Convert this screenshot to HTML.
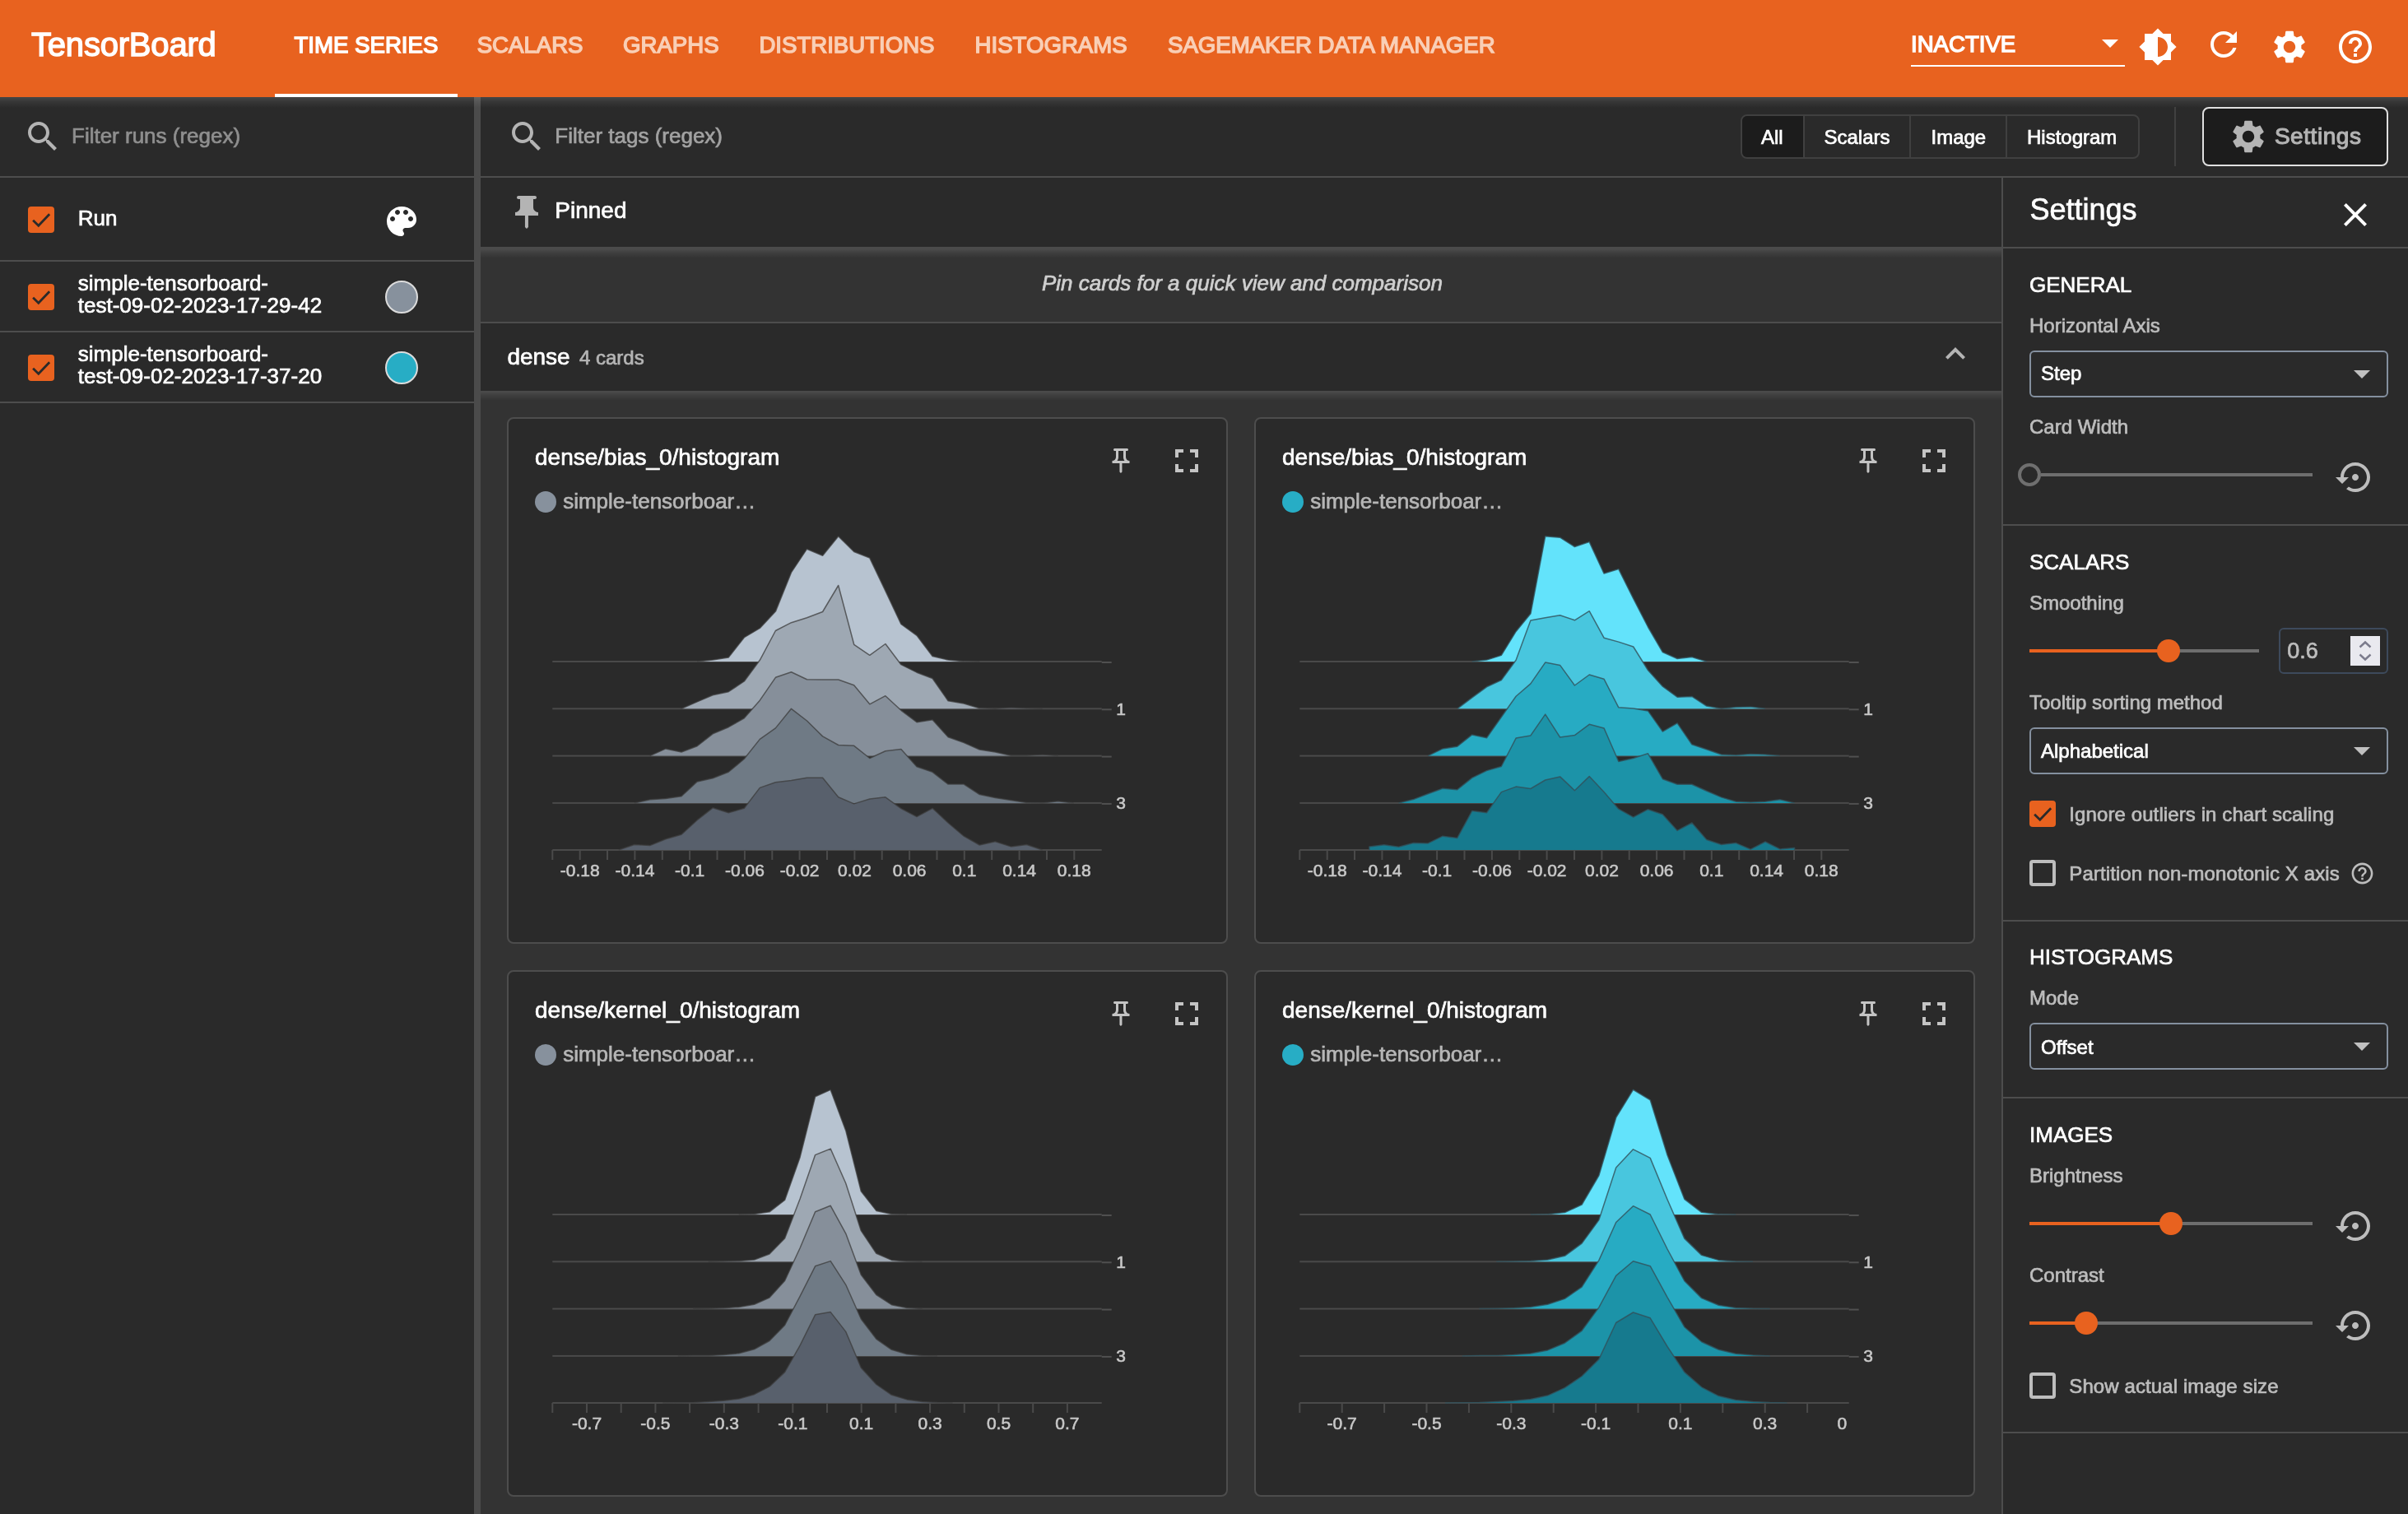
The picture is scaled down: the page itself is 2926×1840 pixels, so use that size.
<!DOCTYPE html>
<html><head><meta charset="utf-8"><title>TensorBoard</title><style>
html,body{margin:0;padding:0;}
@media (max-width:2000px){html{zoom:.5;}}
body{width:2926px;height:1840px;overflow:hidden;background:#333333;font-family:"Liberation Sans",sans-serif;color:#fff;position:relative;}
div,span,svg{box-sizing:border-box;}
#root{position:absolute;left:0;top:0;width:2926px;height:1840px;will-change:transform;}
.abs{position:absolute;}
.t{position:absolute;white-space:nowrap;line-height:1;-webkit-text-stroke:0.7px currentColor;}
.med{-webkit-text-stroke:1.1px currentColor;}
.med2{-webkit-text-stroke:1.45px currentColor;}
.logo{-webkit-text-stroke:1.4px currentColor;}
.hdr{left:0;top:0;width:2926px;height:118px;background:#E8621F;}
.tab{font-size:27.6px;top:45px;color:rgba(255,255,255,.7);}
.shadow{background:linear-gradient(to bottom,rgba(255,255,255,.13),rgba(255,255,255,.06) 45%,rgba(255,255,255,0));}
.hl{position:absolute;height:2px;background:#4d4d4d;}
.cb{position:absolute;width:32px;height:32px;border-radius:4px;background:#E8621F;}
.cbo{position:absolute;width:32px;height:32px;border-radius:4px;border:4px solid #bdbdbd;}
.card{position:absolute;width:876px;height:640px;border:2px solid #4d4d4d;border-radius:8px;background:#2a2a2a;}
.ct{font-size:28px;color:#fff;}
.lg{font-size:26px;color:#c2c2c2;}
.ax{font-size:21px;fill:#c8c8c8;stroke:#c8c8c8;stroke-width:0.6px;font-family:"Liberation Sans",sans-serif;}
.sec{font-size:28px;color:#fff;left:2466px;}
.lab{font-size:26px;color:#bdbdbd;left:2466px;}
.sel{position:absolute;left:2466px;width:436px;height:57px;border:2px solid #84909f;border-radius:6px;}
.selt{font-size:26px;color:#fff;left:2480px;}
.trk{position:absolute;height:4px;background:#6e6e6e;}
.trko{position:absolute;height:4px;background:#E8621F;}
.thumb{position:absolute;width:28px;height:28px;border-radius:50%;background:#E8621F;}
</style></head>
<body>
<div id="root">
<div class="abs hdr"></div>
<div class="t logo" style="left:38px;top:33.84px;font-size:40px;letter-spacing:-0.2px;color:#fff;">TensorBoard</div>
<div class="t med2" style="left:357.5px;top:41.04px;font-size:27.6px;color:#fff;">TIME SERIES</div>
<div class="t med2" style="left:579.7px;top:41.04px;font-size:27.6px;color:#F9CFB6;">SCALARS</div>
<div class="t med2" style="left:757px;top:41.04px;font-size:27.6px;color:#F9CFB6;">GRAPHS</div>
<div class="t med2" style="left:922.4px;top:41.04px;font-size:27.6px;color:#F9CFB6;">DISTRIBUTIONS</div>
<div class="t med2" style="left:1184.6px;top:41.04px;font-size:27.6px;color:#F9CFB6;">HISTOGRAMS</div>
<div class="t med2" style="left:1419px;top:41.04px;font-size:27.6px;color:#F9CFB6;">SAGEMAKER DATA MANAGER</div>
<div class="abs" style="left:334px;top:114px;width:222px;height:4px;background:#fff"></div>
<div class="t med2" style="left:2322px;top:39.64px;font-size:27.6px;color:#fff;">INACTIVE</div>
<div class="abs" style="left:2322px;top:79px;width:260px;height:2px;background:#fff"></div>
<svg class="abs" style="left:2554px;top:48px" width="20" height="10" viewBox="0 0 20 10"><path d="M0 0H20L10 10Z" fill="#fff"/></svg>
<svg style="position:absolute;left:2598px;top:33px;" width="48" height="48" viewBox="0 0 24 24"><path fill="#fff" d="M20 15.31L23.31 12 20 8.69V4h-4.690L12 .69 8.690 4H4v4.690L.69 12 4 15.310V20h4.690L12 23.310 15.310 20H20v-4.690zM12 18V6c3.310 0 6 2.690 6 6s-2.690 6-6 6z"/></svg>
<svg style="position:absolute;left:2678px;top:30px;" width="48" height="48" viewBox="0 0 24 24"><path fill="#fff" d="M17.650 6.350C16.200 4.900 14.210 4 12 4c-4.420 0-7.990 3.580-7.990 8s3.570 8 7.990 8c3.730 0 6.840-2.550 7.730-6h-2.080c-.82 2.330-3.040 4-5.650 4-3.310 0-6-2.690-6-6s2.690-6 6-6c1.660 0 3.140.69 4.220 1.780L13 11h7V4l-2.350 2.350z"/></svg>
<svg style="position:absolute;left:2758px;top:33px;" width="48" height="48" viewBox="0 0 24 24"><path fill="#fff" d="M19.140 12.940c.04-.3.06-.61.06-.94 0-.32-.02-.64-.07-.94l2.030-1.580c.18-.14.23-.41.12-.61l-1.920-3.320c-.12-.22-.37-.29-.59-.22l-2.390.96c-.5-.38-1.030-.7-1.620-.94l-.36-2.540c-.04-.24-.24-.41-.48-.41h-3.840c-.24 0-.43.17-.47.41l-.36 2.540c-.59.24-1.130.57-1.620.94l-2.390-.96c-.22-.08-.47 0-.59.22L2.740 8.870c-.12.21-.08.47.12.61l2.030 1.580c-.05.3-.09.63-.09.94s.02.64.07.94l-2.030 1.580c-.18.14-.23.41-.12.61l1.920 3.320c.12.22.37.29.59.22l2.390-.96c.5.38 1.030.7 1.620.94l.36 2.540c.05.24.24.41.48.41h3.840c.24 0 .44-.17.47-.41l.36-2.540c.59-.24 1.130-.56 1.620-.94l2.390.96c.22.08.47 0 .59-.22l1.920-3.320c.12-.22.07-.47-.12-.61l-2.010-1.580zM12 15.600c-1.980 0-3.600-1.620-3.600-3.600s1.620-3.600 3.600-3.600 3.600 1.620 3.600 3.600-1.620 3.600-3.600 3.600z"/></svg>
<svg style="position:absolute;left:2838px;top:33px;" width="48" height="48" viewBox="0 0 24 24"><path fill="#fff" d="M11 18h2v-2h-2v2zm1-16C6.480 2 2 6.480 2 12s4.480 10 10 10 10-4.480 10-10S17.520 2 12 2zm0 18c-4.410 0-8-3.590-8-8s3.590-8 8-8 8 3.590 8 8-3.590 8-8 8zm0-14c-2.210 0-4 1.790-4 4h2c0-1.100.9-2 2-2s2 .9 2 2c0 2-3 1.750-3 5h2c0-2.250 3-2.500 3-5 0-2.210-1.790-4-4-4z"/></svg>
<div class="abs" style="left:0;top:118px;width:576px;height:1722px;background:#2a2a2a"></div>
<div class="abs" style="left:576px;top:118px;width:8px;height:1722px;background:#4b4b4b"></div>
<svg style="position:absolute;left:28px;top:142px;" width="48" height="48" viewBox="0 0 24 24"><path fill="#b4b4b4" d="M15.5 14h-.79l-.28-.27C15.41 12.59 16 11.11 16 9.5 16 5.91 13.09 3 9.5 3S3 5.91 3 9.5 5.91 16 9.5 16c1.61 0 3.09-.59 4.23-1.57l.27.28v.79l5 4.99L20.49 19l-4.99-5zm-6 0C7.01 14 5 11.99 5 9.5S7.01 5 9.5 5 14 7.01 14 9.5 11.99 14 9.5 14z"/></svg>
<div class="t " style="left:87px;top:151.89px;font-size:26px;color:#8f8f8f;">Filter runs (regex)</div>
<div class="hl" style="left:0;top:214px;width:576px"></div>
<div class="hl" style="left:0;top:316px;width:576px"></div>
<div class="hl" style="left:0;top:402px;width:576px"></div>
<div class="hl" style="left:0;top:488px;width:576px"></div>
<div class="cb" style="left:34px;top:251px"><svg width="32" height="32" viewBox="0 0 24 24" style="position:absolute;left:0;top:0"><path d="M4.6 12.6 L9.6 17.4 L19.6 7.0" fill="none" stroke="#2a2a2a" stroke-width="2.1"/></svg></div>
<div class="t " style="left:94.8px;top:251.59px;font-size:26px;color:#fff;">Run</div>
<svg style="position:absolute;left:464px;top:245px;" width="48" height="48" viewBox="0 0 24 24"><path fill="#fff" d="M12 3c-4.97 0-9 4.03-9 9s4.03 9 9 9c.83 0 1.5-.67 1.5-1.5 0-.39-.15-.74-.39-1.01-.23-.26-.38-.61-.38-.99 0-.83.67-1.5 1.5-1.5H16c2.76 0 5-2.24 5-5 0-4.42-4.03-8-9-8zm-5.500 9c-.83 0-1.500-.67-1.500-1.500S5.670 9 6.500 9 8 9.670 8 10.500 7.330 12 6.500 12zm3-4C8.670 8 8 7.330 8 6.500S8.670 5 9.500 5s1.500.67 1.500 1.500S10.330 8 9.500 8zm5 0c-.83 0-1.500-.67-1.500-1.500S13.670 5 14.500 5s1.500.67 1.500 1.500S15.330 8 14.500 8zm3 4c-.83 0-1.500-.67-1.500-1.500S16.670 9 17.500 9s1.500.67 1.500 1.500-.67 1.500-1.500 1.500z"/></svg>
<div class="cb" style="left:34px;top:345px"><svg width="32" height="32" viewBox="0 0 24 24" style="position:absolute;left:0;top:0"><path d="M4.6 12.6 L9.6 17.4 L19.6 7.0" fill="none" stroke="#2a2a2a" stroke-width="2.1"/></svg></div>
<div class="t " style="left:94.8px;top:331.39px;font-size:26px;color:#fff;">simple-tensorboard-</div>
<div class="t " style="left:94.8px;top:358.49px;font-size:26px;color:#fff;">test-09-02-2023-17-29-42</div>
<div class="abs" style="left:468px;top:341px;width:40px;height:40px;border-radius:50%;background:#87919d;border:2px solid #dcdcdc"></div>
<div class="cb" style="left:34px;top:431px"><svg width="32" height="32" viewBox="0 0 24 24" style="position:absolute;left:0;top:0"><path d="M4.6 12.6 L9.6 17.4 L19.6 7.0" fill="none" stroke="#2a2a2a" stroke-width="2.1"/></svg></div>
<div class="t " style="left:94.8px;top:417.39px;font-size:26px;color:#fff;">simple-tensorboard-</div>
<div class="t " style="left:94.8px;top:444.49px;font-size:26px;color:#fff;">test-09-02-2023-17-37-20</div>
<div class="abs" style="left:468px;top:427px;width:40px;height:40px;border-radius:50%;background:#27adc5;border:2px solid #dcdcdc"></div>
<div class="abs" style="left:584px;top:118px;width:2342px;height:96px;background:#2a2a2a"></div>
<div class="hl" style="left:584px;top:214px;width:2342px"></div>
<svg style="position:absolute;left:616px;top:142px;" width="48" height="48" viewBox="0 0 24 24"><path fill="#b4b4b4" d="M15.5 14h-.79l-.28-.27C15.41 12.59 16 11.11 16 9.5 16 5.91 13.09 3 9.5 3S3 5.91 3 9.5 5.91 16 9.5 16c1.61 0 3.09-.59 4.23-1.57l.27.28v.79l5 4.99L20.49 19l-4.99-5zm-6 0C7.01 14 5 11.99 5 9.5S7.01 5 9.5 5 14 7.01 14 9.5 11.99 14 9.5 14z"/></svg>
<div class="t " style="left:674.3px;top:151.89px;font-size:26px;color:#a2a2a2;">Filter tags (regex)</div>
<div class="abs" style="left:2115px;top:139px;width:485px;height:54px;border:2px solid #404040;border-radius:8px;overflow:hidden"><div class="abs" style="left:0;top:0;width:74px;height:50px;background:#1c1c1c"></div><div class="abs" style="left:74px;top:0;width:2px;height:50px;background:#404040"></div><div class="abs" style="left:203px;top:0;width:2px;height:50px;background:#404040"></div><div class="abs" style="left:320px;top:0;width:2px;height:50px;background:#404040"></div></div>
<div class="t " style="left:2140px;top:154.68px;font-size:24px;color:#fff;">All</div>
<div class="t " style="left:2216.5px;top:154.68px;font-size:24px;color:#fff;">Scalars</div>
<div class="t " style="left:2346.5px;top:154.68px;font-size:24px;color:#fff;">Image</div>
<div class="t " style="left:2463px;top:154.68px;font-size:24px;color:#fff;">Histogram</div>
<div class="abs" style="left:2642px;top:130px;width:2px;height:72px;background:#404040"></div>
<div class="abs" style="left:2676px;top:130px;width:226px;height:72px;border:2px solid #e0e0e0;border-radius:8px;background:#1c1c1c"></div>
<svg style="position:absolute;left:2708px;top:142px;" width="48" height="48" viewBox="0 0 24 24"><path fill="#b4b4b4" d="M19.140 12.940c.04-.3.06-.61.06-.94 0-.32-.02-.64-.07-.94l2.030-1.580c.18-.14.23-.41.12-.61l-1.920-3.320c-.12-.22-.37-.29-.59-.22l-2.390.96c-.5-.38-1.030-.7-1.620-.94l-.36-2.540c-.04-.24-.24-.41-.48-.41h-3.840c-.24 0-.43.17-.47.41l-.36 2.540c-.59.24-1.130.57-1.620.94l-2.390-.96c-.22-.08-.47 0-.59.22L2.740 8.870c-.12.21-.08.47.12.61l2.030 1.580c-.05.3-.09.63-.09.94s.02.64.07.94l-2.030 1.580c-.18.14-.23.41-.12.61l1.920 3.320c.12.22.37.29.59.22l2.390-.96c.5.38 1.030.7 1.620.94l.36 2.540c.05.24.24.41.48.41h3.840c.24 0 .44-.17.47-.41l.36-2.540c.59-.24 1.130-.56 1.620-.94l2.390.96c.22.08.47 0 .59-.22l1.920-3.320c.12-.22.07-.47-.12-.61l-2.010-1.580zM12 15.600c-1.980 0-3.600-1.620-3.600-3.600s1.620-3.600 3.600-3.600 3.600 1.620 3.600 3.600-1.620 3.600-3.600 3.600z"/></svg>
<div class="t med" style="left:2763.9px;top:152.30px;font-size:28px;color:#b4b4b4;letter-spacing:0.55px;">Settings</div>
<div class="abs" style="left:584px;top:216px;width:1848px;height:84px;background:#2a2a2a"></div>
<svg style="position:absolute;left:615.6px;top:234px;" width="48" height="48" viewBox="0 0 24 24"><path fill="#b4b4b4" d="M16 9V4h1c.55 0 1-.45 1-1s-.45-1-1-1H7c-.55 0-1 .45-1 1s.45 1 1 1h1v5c0 1.660-1.340 3-3 3v2h5.970v7l1 1 1-1v-7H19v-2c-1.660 0-3-1.340-3-3z"/></svg>
<div class="t " style="left:674.3px;top:242.40px;font-size:28px;color:#fff;">Pinned</div>
<div class="hl" style="left:584px;top:300px;width:1848px;background:#4b4b4b"></div>
<div class="abs shadow" style="left:584px;top:302px;width:1848px;height:12px"></div>
<div class="t " style="left:1265.9px;top:330.79px;font-size:26px;color:#cfcfcf;font-style:italic;">Pin cards for a quick view and comparison</div>
<div class="hl" style="left:584px;top:391px;width:1848px"></div>
<div class="abs" style="left:584px;top:393px;width:1848px;height:82px;background:#2a2a2a"></div>
<div class="t " style="left:616.4px;top:419.70px;font-size:28px;color:#fff;">dense</div>
<div class="t " style="left:704px;top:423.08px;font-size:24px;color:#b4b4b4;">4 cards</div>
<svg style="position:absolute;left:2352px;top:406px;" width="48" height="48" viewBox="0 0 24 24"><path fill="#b4b4b4" d="M12 8l-6 6 1.410 1.410L12 10.830l4.590 4.580L18 14z"/></svg>
<div class="abs shadow" style="left:584px;top:475px;width:1848px;height:12px"></div>
<div class="abs shadow" style="left:0;top:118px;width:2926px;height:13px"></div>
<div class="card" style="left:616px;top:507px"></div>
<div class="t " style="left:650px;top:541.90px;font-size:28px;color:#fff;">dense/bias_0/histogram</div>
<div class="abs" style="left:650px;top:597px;width:26px;height:26px;border-radius:50%;background:#87919d"></div>
<div class="t " style="left:684.2px;top:595.99px;font-size:26px;color:#b6b6b6;">simple-tensorboar…</div>
<svg style="position:absolute;left:1344px;top:542px;" width="36" height="36" viewBox="0 0 24 24"><path fill="#c4c4c4" d="M14 4v5c0 1.120.37 2.160 1 3H9c.65-.86 1-1.900 1-3V4h4m3-2H7c-.55 0-1 .45-1 1s.45 1 1 1h1v5c0 1.660-1.340 3-3 3v2h5.970v7l1 1 1-1v-7H19v-2c-1.660 0-3-1.340-3-3V4h1c.55 0 1-.45 1-1s-.45-1-1-1z"/></svg>
<svg style="position:absolute;left:1418px;top:536px;" width="48" height="48" viewBox="0 0 24 24"><path fill="#c4c4c4" d="M7 14H5v5h5v-2H7v-3zm-2-4h2V7h3V5H5v5zm12 7h-3v2h5v-5h-2v3zM14 5v2h3v3h2V5h-5z"/></svg>
<div class="card" style="left:1524px;top:507px"></div>
<div class="t " style="left:1558px;top:541.90px;font-size:28px;color:#fff;">dense/bias_0/histogram</div>
<div class="abs" style="left:1558px;top:597px;width:26px;height:26px;border-radius:50%;background:#27adc5"></div>
<div class="t " style="left:1592.2px;top:595.99px;font-size:26px;color:#b6b6b6;">simple-tensorboar…</div>
<svg style="position:absolute;left:2252px;top:542px;" width="36" height="36" viewBox="0 0 24 24"><path fill="#c4c4c4" d="M14 4v5c0 1.120.37 2.160 1 3H9c.65-.86 1-1.900 1-3V4h4m3-2H7c-.55 0-1 .45-1 1s.45 1 1 1h1v5c0 1.660-1.340 3-3 3v2h5.970v7l1 1 1-1v-7H19v-2c-1.660 0-3-1.340-3-3V4h1c.55 0 1-.45 1-1s-.45-1-1-1z"/></svg>
<svg style="position:absolute;left:2326px;top:536px;" width="48" height="48" viewBox="0 0 24 24"><path fill="#c4c4c4" d="M7 14H5v5h5v-2H7v-3zm-2-4h2V7h3V5H5v5zm12 7h-3v2h5v-5h-2v3zM14 5v2h3v3h2V5h-5z"/></svg>
<div class="card" style="left:616px;top:1179px"></div>
<div class="t " style="left:650px;top:1213.90px;font-size:28px;color:#fff;">dense/kernel_0/histogram</div>
<div class="abs" style="left:650px;top:1269px;width:26px;height:26px;border-radius:50%;background:#87919d"></div>
<div class="t " style="left:684.2px;top:1267.99px;font-size:26px;color:#b6b6b6;">simple-tensorboar…</div>
<svg style="position:absolute;left:1344px;top:1214px;" width="36" height="36" viewBox="0 0 24 24"><path fill="#c4c4c4" d="M14 4v5c0 1.120.37 2.160 1 3H9c.65-.86 1-1.900 1-3V4h4m3-2H7c-.55 0-1 .45-1 1s.45 1 1 1h1v5c0 1.660-1.340 3-3 3v2h5.970v7l1 1 1-1v-7H19v-2c-1.660 0-3-1.340-3-3V4h1c.55 0 1-.45 1-1s-.45-1-1-1z"/></svg>
<svg style="position:absolute;left:1418px;top:1208px;" width="48" height="48" viewBox="0 0 24 24"><path fill="#c4c4c4" d="M7 14H5v5h5v-2H7v-3zm-2-4h2V7h3V5H5v5zm12 7h-3v2h5v-5h-2v3zM14 5v2h3v3h2V5h-5z"/></svg>
<div class="card" style="left:1524px;top:1179px"></div>
<div class="t " style="left:1558px;top:1213.90px;font-size:28px;color:#fff;">dense/kernel_0/histogram</div>
<div class="abs" style="left:1558px;top:1269px;width:26px;height:26px;border-radius:50%;background:#27adc5"></div>
<div class="t " style="left:1592.2px;top:1267.99px;font-size:26px;color:#b6b6b6;">simple-tensorboar…</div>
<svg style="position:absolute;left:2252px;top:1214px;" width="36" height="36" viewBox="0 0 24 24"><path fill="#c4c4c4" d="M14 4v5c0 1.120.37 2.160 1 3H9c.65-.86 1-1.900 1-3V4h4m3-2H7c-.55 0-1 .45-1 1s.45 1 1 1h1v5c0 1.660-1.340 3-3 3v2h5.970v7l1 1 1-1v-7H19v-2c-1.660 0-3-1.340-3-3V4h1c.55 0 1-.45 1-1s-.45-1-1-1z"/></svg>
<svg style="position:absolute;left:2326px;top:1208px;" width="48" height="48" viewBox="0 0 24 24"><path fill="#c4c4c4" d="M7 14H5v5h5v-2H7v-3zm-2-4h2V7h3V5H5v5zm12 7h-3v2h5v-5h-2v3zM14 5v2h3v3h2V5h-5z"/></svg>
<svg class="abs" style="left:0;top:0" width="2926" height="1840" viewBox="0 0 2926 1840">
<rect x="671.3" y="803.0" width="667.4" height="2" fill="#4a4a4a"/>
<rect x="1338.7" y="804.0" width="12" height="2" fill="#505050"/>
<path d="M847.1,804.0 L847.1,804.0 L866.1,802.1 L885.2,799.1 L904.3,774.7 L923.3,763.4 L942.4,743.1 L961.5,695.7 L980.5,667.2 L999.6,675.3 L1018.7,651.8 L1037.7,670.5 L1056.8,678.1 L1075.9,718.1 L1094.9,758.5 L1114.0,772.3 L1133.1,797.5 L1152.1,802.1 L1171.2,803.7 L1190.3,804.0 L1190.3,804.0" fill="#b7c3d0" stroke="rgba(60,60,60,.75)" stroke-width="1.5" stroke-linejoin="round"/>
<rect x="671.3" y="860.3" width="667.4" height="2" fill="#4a4a4a"/>
<rect x="1338.7" y="861.3" width="12" height="2" fill="#505050"/>
<path d="M828.0,861.3 L828.0,861.3 L847.1,852.9 L866.1,844.8 L885.2,840.7 L904.3,828.0 L923.3,802.3 L942.4,766.5 L961.5,756.7 L980.5,750.8 L999.6,743.5 L1018.7,711.5 L1037.7,783.3 L1056.8,796.3 L1075.9,782.5 L1094.9,807.7 L1114.0,817.2 L1133.1,824.5 L1152.1,851.8 L1171.2,855.1 L1190.3,860.8 L1209.3,861.3 L1228.4,860.2 L1247.5,861.0 L1266.6,861.3 L1266.6,861.3" fill="#9ea8b3" stroke="rgba(60,60,60,.75)" stroke-width="1.5" stroke-linejoin="round"/>
<rect x="671.3" y="917.6" width="667.4" height="2" fill="#4a4a4a"/>
<rect x="1338.7" y="918.6" width="12" height="2" fill="#505050"/>
<path d="M789.8,918.6 L789.8,918.6 L808.9,909.9 L828.0,914.0 L847.1,906.7 L866.1,891.8 L885.2,883.7 L904.3,872.8 L923.3,851.2 L942.4,823.3 L961.5,816.8 L980.5,825.7 L999.6,826.0 L1018.7,826.0 L1037.7,832.7 L1056.8,855.8 L1075.9,845.7 L1094.9,863.3 L1114.0,877.7 L1133.1,874.7 L1152.1,895.8 L1171.2,902.6 L1190.3,911.0 L1209.3,914.0 L1228.4,918.3 L1247.5,918.3 L1266.6,917.5 L1285.6,918.6 L1285.6,918.6" fill="#868f9a" stroke="rgba(60,60,60,.75)" stroke-width="1.5" stroke-linejoin="round"/>
<rect x="671.3" y="974.9" width="667.4" height="2" fill="#4a4a4a"/>
<rect x="1338.7" y="975.9" width="12" height="2" fill="#505050"/>
<path d="M770.8,975.9 L770.8,975.9 L789.8,971.8 L808.9,970.5 L828.0,967.8 L847.1,949.9 L866.1,945.8 L885.2,938.3 L904.3,922.3 L923.3,898.4 L942.4,884.9 L961.5,861.3 L980.5,876.0 L999.6,894.9 L1018.7,905.5 L1037.7,906.3 L1056.8,921.5 L1075.9,912.8 L1094.9,910.6 L1114.0,931.8 L1133.1,938.3 L1152.1,953.1 L1171.2,953.1 L1190.3,965.6 L1209.3,969.4 L1228.4,972.6 L1247.5,975.4 L1266.6,975.9 L1285.6,973.7 L1304.7,975.9 L1304.7,975.9" fill="#6f7a85" stroke="rgba(60,60,60,.75)" stroke-width="1.5" stroke-linejoin="round"/>
<rect x="671.3" y="1032.0" width="667.4" height="2" fill="#4a4a4a"/>
<path d="M751.7,1033.0 L751.7,1033.0 L770.8,1026.5 L789.8,1027.6 L808.9,1019.7 L828.0,1014.3 L847.1,996.7 L866.1,981.8 L885.2,987.8 L904.3,982.3 L923.3,957.4 L942.4,950.7 L961.5,948.5 L980.5,945.2 L999.6,945.2 L1018.7,968.8 L1037.7,976.9 L1056.8,971.0 L1075.9,968.8 L1094.9,982.6 L1114.0,992.6 L1133.1,982.3 L1152.1,1000.0 L1171.2,1016.2 L1190.3,1027.0 L1209.3,1022.7 L1228.4,1028.9 L1247.5,1026.5 L1266.6,1033.0 L1266.6,1033.0" fill="#58606c" stroke="rgba(60,60,60,.75)" stroke-width="1.5" stroke-linejoin="round"/>
<rect x="670.3" y="1033.0" width="2" height="12" fill="#4a4a4a"/>
<rect x="703.7" y="1033.0" width="2" height="12" fill="#4a4a4a"/>
<rect x="737.0" y="1033.0" width="2" height="12" fill="#4a4a4a"/>
<rect x="770.4" y="1033.0" width="2" height="12" fill="#4a4a4a"/>
<rect x="803.8" y="1033.0" width="2" height="12" fill="#4a4a4a"/>
<rect x="837.1" y="1033.0" width="2" height="12" fill="#4a4a4a"/>
<rect x="870.5" y="1033.0" width="2" height="12" fill="#4a4a4a"/>
<rect x="903.9" y="1033.0" width="2" height="12" fill="#4a4a4a"/>
<rect x="937.3" y="1033.0" width="2" height="12" fill="#4a4a4a"/>
<rect x="970.6" y="1033.0" width="2" height="12" fill="#4a4a4a"/>
<rect x="1004.0" y="1033.0" width="2" height="12" fill="#4a4a4a"/>
<rect x="1037.4" y="1033.0" width="2" height="12" fill="#4a4a4a"/>
<rect x="1070.7" y="1033.0" width="2" height="12" fill="#4a4a4a"/>
<rect x="1104.1" y="1033.0" width="2" height="12" fill="#4a4a4a"/>
<rect x="1137.5" y="1033.0" width="2" height="12" fill="#4a4a4a"/>
<rect x="1170.8" y="1033.0" width="2" height="12" fill="#4a4a4a"/>
<rect x="1204.2" y="1033.0" width="2" height="12" fill="#4a4a4a"/>
<rect x="1237.6" y="1033.0" width="2" height="12" fill="#4a4a4a"/>
<rect x="1271.0" y="1033.0" width="2" height="12" fill="#4a4a4a"/>
<rect x="1304.3" y="1033.0" width="2" height="12" fill="#4a4a4a"/>
<text x="704.7" y="1065.4" text-anchor="middle" class="ax">-0.18</text>
<text x="771.4" y="1065.4" text-anchor="middle" class="ax">-0.14</text>
<text x="838.1" y="1065.4" text-anchor="middle" class="ax">-0.1</text>
<text x="904.9" y="1065.4" text-anchor="middle" class="ax">-0.06</text>
<text x="971.6" y="1065.4" text-anchor="middle" class="ax">-0.02</text>
<text x="1038.4" y="1065.4" text-anchor="middle" class="ax">0.02</text>
<text x="1105.1" y="1065.4" text-anchor="middle" class="ax">0.06</text>
<text x="1171.8" y="1065.4" text-anchor="middle" class="ax">0.1</text>
<text x="1238.6" y="1065.4" text-anchor="middle" class="ax">0.14</text>
<text x="1305.3" y="1065.4" text-anchor="middle" class="ax">0.18</text>
<text x="1356.2" y="868.8" class="ax">1</text>
<text x="1356.2" y="983.4" class="ax">3</text>
<rect x="1579.3" y="803.0" width="667.4" height="2" fill="#4a4a4a"/>
<rect x="2246.7" y="804.0" width="12" height="2" fill="#505050"/>
<path d="M1788.7,804.0 L1788.7,804.0 L1806.5,802.1 L1824.3,796.4 L1842.1,767.4 L1859.9,745.8 L1877.7,651.8 L1895.6,653.2 L1913.4,664.5 L1931.2,658.6 L1949.0,697.0 L1966.8,691.6 L1984.7,727.4 L2002.5,762.0 L2020.3,792.6 L2038.1,800.5 L2055.9,798.6 L2073.7,804.0 L2073.7,804.0" fill="#63e3fb" stroke="rgba(50,80,90,.8)" stroke-width="1.5" stroke-linejoin="round"/>
<rect x="1579.3" y="860.3" width="667.4" height="2" fill="#4a4a4a"/>
<rect x="2246.7" y="861.3" width="12" height="2" fill="#505050"/>
<path d="M1770.8,861.3 L1770.8,861.3 L1788.7,847.8 L1806.5,834.8 L1824.3,826.6 L1842.1,802.3 L1859.9,754.1 L1877.7,750.8 L1895.6,747.8 L1913.4,753.8 L1931.2,742.7 L1949.0,775.2 L1966.8,780.1 L1984.7,786.0 L2002.5,814.5 L2020.3,834.2 L2038.1,847.2 L2055.9,846.4 L2073.7,858.1 L2091.6,861.3 L2109.4,859.4 L2127.2,859.1 L2145.0,861.3 L2145.0,861.3" fill="#48c6de" stroke="rgba(50,80,90,.8)" stroke-width="1.5" stroke-linejoin="round"/>
<rect x="1579.3" y="917.6" width="667.4" height="2" fill="#4a4a4a"/>
<rect x="2246.7" y="918.6" width="12" height="2" fill="#505050"/>
<path d="M1735.2,918.6 L1735.2,918.6 L1753.0,909.9 L1770.8,907.2 L1788.7,892.9 L1806.5,896.7 L1824.3,871.5 L1842.1,846.3 L1859.9,830.9 L1877.7,805.1 L1895.6,808.4 L1913.4,833.0 L1931.2,820.0 L1949.0,825.2 L1966.8,859.8 L1984.7,860.9 L2002.5,863.9 L2020.3,889.1 L2038.1,878.8 L2055.9,904.8 L2073.7,910.7 L2091.6,917.0 L2109.4,917.8 L2127.2,916.4 L2145.0,917.0 L2162.8,918.6 L2162.8,918.6" fill="#27abc3" stroke="rgba(50,80,90,.8)" stroke-width="1.5" stroke-linejoin="round"/>
<rect x="1579.3" y="974.9" width="667.4" height="2" fill="#4a4a4a"/>
<rect x="2246.7" y="975.9" width="12" height="2" fill="#505050"/>
<path d="M1699.6,975.9 L1699.6,975.9 L1717.4,971.6 L1735.2,964.8 L1753.0,958.3 L1770.8,959.7 L1788.7,945.3 L1806.5,936.6 L1824.3,931.5 L1842.1,897.1 L1859.9,893.9 L1877.7,868.1 L1895.6,896.0 L1913.4,893.6 L1931.2,880.3 L1949.0,884.9 L1966.8,925.5 L1984.7,921.5 L2002.5,915.8 L2020.3,946.7 L2038.1,953.2 L2055.9,953.2 L2073.7,961.3 L2091.6,968.9 L2109.4,974.3 L2127.2,975.1 L2145.0,974.3 L2162.8,971.8 L2180.6,975.9 L2180.6,975.9" fill="#1c93a8" stroke="rgba(50,80,90,.8)" stroke-width="1.5" stroke-linejoin="round"/>
<rect x="1579.3" y="1032.0" width="667.4" height="2" fill="#4a4a4a"/>
<path d="M1663.9,1033.0 L1663.9,1028.9 L1681.8,1026.8 L1699.6,1029.2 L1717.4,1024.6 L1735.2,1024.9 L1753.0,1016.2 L1770.8,1018.4 L1788.7,985.6 L1806.5,987.8 L1824.3,962.6 L1842.1,956.1 L1859.9,958.5 L1877.7,948.0 L1895.6,943.9 L1913.4,960.7 L1931.2,943.6 L1949.0,962.6 L1966.8,983.2 L1984.7,993.2 L2002.5,983.7 L2020.3,989.7 L2038.1,1009.4 L2055.9,1000.0 L2073.7,1020.5 L2091.6,1026.5 L2109.4,1024.6 L2127.2,1032.2 L2145.0,1023.0 L2162.8,1031.9 L2180.6,1030.6 L2180.6,1033.0" fill="#167a8e" stroke="rgba(50,80,90,.8)" stroke-width="1.5" stroke-linejoin="round"/>
<rect x="1578.3" y="1033.0" width="2" height="12" fill="#4a4a4a"/>
<rect x="1611.7" y="1033.0" width="2" height="12" fill="#4a4a4a"/>
<rect x="1645.0" y="1033.0" width="2" height="12" fill="#4a4a4a"/>
<rect x="1678.4" y="1033.0" width="2" height="12" fill="#4a4a4a"/>
<rect x="1711.8" y="1033.0" width="2" height="12" fill="#4a4a4a"/>
<rect x="1745.1" y="1033.0" width="2" height="12" fill="#4a4a4a"/>
<rect x="1778.5" y="1033.0" width="2" height="12" fill="#4a4a4a"/>
<rect x="1811.9" y="1033.0" width="2" height="12" fill="#4a4a4a"/>
<rect x="1845.3" y="1033.0" width="2" height="12" fill="#4a4a4a"/>
<rect x="1878.6" y="1033.0" width="2" height="12" fill="#4a4a4a"/>
<rect x="1912.0" y="1033.0" width="2" height="12" fill="#4a4a4a"/>
<rect x="1945.4" y="1033.0" width="2" height="12" fill="#4a4a4a"/>
<rect x="1978.7" y="1033.0" width="2" height="12" fill="#4a4a4a"/>
<rect x="2012.1" y="1033.0" width="2" height="12" fill="#4a4a4a"/>
<rect x="2045.5" y="1033.0" width="2" height="12" fill="#4a4a4a"/>
<rect x="2078.8" y="1033.0" width="2" height="12" fill="#4a4a4a"/>
<rect x="2112.2" y="1033.0" width="2" height="12" fill="#4a4a4a"/>
<rect x="2145.6" y="1033.0" width="2" height="12" fill="#4a4a4a"/>
<rect x="2179.0" y="1033.0" width="2" height="12" fill="#4a4a4a"/>
<rect x="2212.3" y="1033.0" width="2" height="12" fill="#4a4a4a"/>
<text x="1612.7" y="1065.4" text-anchor="middle" class="ax">-0.18</text>
<text x="1679.4" y="1065.4" text-anchor="middle" class="ax">-0.14</text>
<text x="1746.1" y="1065.4" text-anchor="middle" class="ax">-0.1</text>
<text x="1812.9" y="1065.4" text-anchor="middle" class="ax">-0.06</text>
<text x="1879.6" y="1065.4" text-anchor="middle" class="ax">-0.02</text>
<text x="1946.4" y="1065.4" text-anchor="middle" class="ax">0.02</text>
<text x="2013.1" y="1065.4" text-anchor="middle" class="ax">0.06</text>
<text x="2079.8" y="1065.4" text-anchor="middle" class="ax">0.1</text>
<text x="2146.6" y="1065.4" text-anchor="middle" class="ax">0.14</text>
<text x="2213.3" y="1065.4" text-anchor="middle" class="ax">0.18</text>
<text x="2264.2" y="868.8" class="ax">1</text>
<text x="2264.2" y="983.4" class="ax">3</text>
<rect x="671.3" y="1475.0" width="667.4" height="2" fill="#4a4a4a"/>
<rect x="1338.7" y="1476.0" width="12" height="2" fill="#505050"/>
<path d="M897.9,1476.0 L897.9,1476.0 L916.5,1475.5 L935.0,1472.8 L953.6,1458.4 L972.1,1406.4 L990.6,1332.8 L1009.2,1324.4 L1027.7,1373.9 L1046.3,1447.8 L1064.8,1471.4 L1083.4,1475.5 L1101.9,1476.0 L1101.9,1476.0" fill="#b7c3d0" stroke="rgba(60,60,60,.75)" stroke-width="1.5" stroke-linejoin="round"/>
<rect x="671.3" y="1532.3" width="667.4" height="2" fill="#4a4a4a"/>
<rect x="1338.7" y="1533.3" width="12" height="2" fill="#505050"/>
<path d="M860.8,1533.3 L860.8,1533.3 L879.4,1533.0 L897.9,1532.5 L916.5,1531.1 L935.0,1524.1 L953.6,1505.1 L972.1,1457.0 L990.6,1403.6 L1009.2,1396.1 L1027.7,1438.0 L1046.3,1495.7 L1064.8,1523.3 L1083.4,1531.4 L1101.9,1533.0 L1120.5,1533.3 L1120.5,1533.3" fill="#9ea8b3" stroke="rgba(60,60,60,.75)" stroke-width="1.5" stroke-linejoin="round"/>
<rect x="671.3" y="1589.6" width="667.4" height="2" fill="#4a4a4a"/>
<rect x="1338.7" y="1590.6" width="12" height="2" fill="#505050"/>
<path d="M842.3,1590.6 L842.3,1590.6 L860.8,1590.3 L879.4,1589.8 L897.9,1588.4 L916.5,1585.2 L935.0,1577.1 L953.6,1556.5 L972.1,1516.7 L990.6,1472.8 L1009.2,1465.3 L1027.7,1499.1 L1046.3,1549.2 L1064.8,1573.5 L1083.4,1585.7 L1101.9,1589.5 L1120.5,1590.6 L1120.5,1590.6" fill="#868f9a" stroke="rgba(60,60,60,.75)" stroke-width="1.5" stroke-linejoin="round"/>
<rect x="671.3" y="1646.9" width="667.4" height="2" fill="#4a4a4a"/>
<rect x="1338.7" y="1647.9" width="12" height="2" fill="#505050"/>
<path d="M823.8,1647.9 L823.8,1647.9 L842.3,1647.6 L860.8,1647.4 L879.4,1646.5 L897.9,1644.7 L916.5,1639.8 L935.0,1629.5 L953.6,1610.5 L972.1,1575.3 L990.6,1538.8 L1009.2,1532.6 L1027.7,1561.3 L1046.3,1603.0 L1064.8,1627.3 L1083.4,1640.3 L1101.9,1645.7 L1120.5,1647.6 L1139.0,1647.9 L1139.0,1647.9" fill="#6f7a85" stroke="rgba(60,60,60,.75)" stroke-width="1.5" stroke-linejoin="round"/>
<rect x="671.3" y="1704.0" width="667.4" height="2" fill="#4a4a4a"/>
<path d="M805.2,1705.0 L805.2,1705.0 L823.8,1704.7 L842.3,1704.5 L860.8,1703.4 L879.4,1702.3 L897.9,1700.1 L916.5,1694.7 L935.0,1685.2 L953.6,1667.6 L972.1,1635.2 L990.6,1597.8 L1009.2,1594.6 L1027.7,1618.4 L1046.3,1662.2 L1064.8,1682.5 L1083.4,1695.3 L1101.9,1700.9 L1120.5,1703.4 L1139.0,1704.5 L1157.5,1705.0 L1157.5,1705.0" fill="#58606c" stroke="rgba(60,60,60,.75)" stroke-width="1.5" stroke-linejoin="round"/>
<rect x="670.3" y="1705.0" width="2" height="12" fill="#4a4a4a"/>
<rect x="712.0" y="1705.0" width="2" height="12" fill="#4a4a4a"/>
<rect x="753.7" y="1705.0" width="2" height="12" fill="#4a4a4a"/>
<rect x="795.4" y="1705.0" width="2" height="12" fill="#4a4a4a"/>
<rect x="837.1" y="1705.0" width="2" height="12" fill="#4a4a4a"/>
<rect x="878.8" y="1705.0" width="2" height="12" fill="#4a4a4a"/>
<rect x="920.6" y="1705.0" width="2" height="12" fill="#4a4a4a"/>
<rect x="962.3" y="1705.0" width="2" height="12" fill="#4a4a4a"/>
<rect x="1004.0" y="1705.0" width="2" height="12" fill="#4a4a4a"/>
<rect x="1045.7" y="1705.0" width="2" height="12" fill="#4a4a4a"/>
<rect x="1087.4" y="1705.0" width="2" height="12" fill="#4a4a4a"/>
<rect x="1129.1" y="1705.0" width="2" height="12" fill="#4a4a4a"/>
<rect x="1170.8" y="1705.0" width="2" height="12" fill="#4a4a4a"/>
<rect x="1212.5" y="1705.0" width="2" height="12" fill="#4a4a4a"/>
<rect x="1254.2" y="1705.0" width="2" height="12" fill="#4a4a4a"/>
<rect x="1295.9" y="1705.0" width="2" height="12" fill="#4a4a4a"/>
<text x="713.0" y="1737.4" text-anchor="middle" class="ax">-0.7</text>
<text x="796.4" y="1737.4" text-anchor="middle" class="ax">-0.5</text>
<text x="879.8" y="1737.4" text-anchor="middle" class="ax">-0.3</text>
<text x="963.3" y="1737.4" text-anchor="middle" class="ax">-0.1</text>
<text x="1046.7" y="1737.4" text-anchor="middle" class="ax">0.1</text>
<text x="1130.1" y="1737.4" text-anchor="middle" class="ax">0.3</text>
<text x="1213.5" y="1737.4" text-anchor="middle" class="ax">0.5</text>
<text x="1296.9" y="1737.4" text-anchor="middle" class="ax">0.7</text>
<text x="1356.2" y="1540.8" class="ax">1</text>
<text x="1356.2" y="1655.4" class="ax">3</text>
<rect x="1579.3" y="1475.0" width="667.4" height="2" fill="#4a4a4a"/>
<rect x="2246.7" y="1476.0" width="12" height="2" fill="#505050"/>
<path d="M1859.8,1476.0 L1859.8,1476.0 L1880.6,1475.7 L1901.4,1473.6 L1922.1,1464.1 L1942.9,1428.6 L1963.7,1358.2 L1984.5,1324.3 L2005.2,1336.8 L2026.0,1403.7 L2046.8,1457.3 L2067.6,1473.3 L2088.3,1475.7 L2109.1,1476.0 L2109.1,1476.0" fill="#63e3fb" stroke="rgba(50,80,90,.8)" stroke-width="1.5" stroke-linejoin="round"/>
<rect x="1579.3" y="1532.3" width="667.4" height="2" fill="#4a4a4a"/>
<rect x="2246.7" y="1533.3" width="12" height="2" fill="#505050"/>
<path d="M1818.3,1533.3 L1818.3,1533.3 L1839.0,1533.0 L1859.8,1532.5 L1880.6,1530.9 L1901.4,1526.3 L1922.1,1511.1 L1942.9,1482.6 L1963.7,1419.0 L1984.5,1396.8 L2005.2,1407.4 L2026.0,1457.7 L2046.8,1505.1 L2067.6,1525.4 L2088.3,1531.4 L2109.1,1533.0 L2129.9,1533.3 L2129.9,1533.3" fill="#48c6de" stroke="rgba(50,80,90,.8)" stroke-width="1.5" stroke-linejoin="round"/>
<rect x="1579.3" y="1589.6" width="667.4" height="2" fill="#4a4a4a"/>
<rect x="2246.7" y="1590.6" width="12" height="2" fill="#505050"/>
<path d="M1797.5,1590.6 L1797.5,1590.6 L1818.3,1590.3 L1839.0,1589.8 L1859.8,1588.4 L1880.6,1585.2 L1901.4,1578.4 L1922.1,1564.1 L1942.9,1531.6 L1963.7,1485.5 L1984.5,1465.7 L2005.2,1476.0 L2026.0,1518.0 L2046.8,1556.7 L2067.6,1577.6 L2088.3,1586.3 L2109.1,1589.5 L2129.9,1590.3 L2150.7,1590.6 L2150.7,1590.6" fill="#27abc3" stroke="rgba(50,80,90,.8)" stroke-width="1.5" stroke-linejoin="round"/>
<rect x="1579.3" y="1646.9" width="667.4" height="2" fill="#4a4a4a"/>
<rect x="2246.7" y="1647.9" width="12" height="2" fill="#505050"/>
<path d="M1776.7,1647.9 L1776.7,1647.9 L1797.5,1647.6 L1818.3,1647.4 L1839.0,1646.5 L1859.8,1644.9 L1880.6,1640.9 L1901.4,1632.2 L1922.1,1617.3 L1942.9,1588.9 L1963.7,1550.4 L1984.5,1532.8 L2005.2,1538.7 L2026.0,1576.7 L2046.8,1612.7 L2067.6,1630.8 L2088.3,1640.3 L2109.1,1645.2 L2129.9,1647.1 L2150.7,1647.9 L2150.7,1647.9" fill="#1c93a8" stroke="rgba(50,80,90,.8)" stroke-width="1.5" stroke-linejoin="round"/>
<rect x="1579.3" y="1704.0" width="667.4" height="2" fill="#4a4a4a"/>
<path d="M1755.9,1705.0 L1755.9,1705.0 L1776.7,1704.7 L1797.5,1704.5 L1818.3,1703.6 L1839.0,1702.6 L1859.8,1700.4 L1880.6,1696.1 L1901.4,1686.6 L1922.1,1672.5 L1942.9,1651.9 L1963.7,1607.5 L1984.5,1595.0 L2005.2,1601.8 L2026.0,1636.5 L2046.8,1667.6 L2067.6,1685.8 L2088.3,1696.6 L2109.1,1701.5 L2129.9,1703.4 L2150.7,1704.5 L2171.4,1705.0 L2171.4,1705.0" fill="#167a8e" stroke="rgba(50,80,90,.8)" stroke-width="1.5" stroke-linejoin="round"/>
<rect x="1578.3" y="1705.0" width="2" height="12" fill="#4a4a4a"/>
<rect x="1629.7" y="1705.0" width="2" height="12" fill="#4a4a4a"/>
<rect x="1681.1" y="1705.0" width="2" height="12" fill="#4a4a4a"/>
<rect x="1732.5" y="1705.0" width="2" height="12" fill="#4a4a4a"/>
<rect x="1783.9" y="1705.0" width="2" height="12" fill="#4a4a4a"/>
<rect x="1835.3" y="1705.0" width="2" height="12" fill="#4a4a4a"/>
<rect x="1886.7" y="1705.0" width="2" height="12" fill="#4a4a4a"/>
<rect x="1938.1" y="1705.0" width="2" height="12" fill="#4a4a4a"/>
<rect x="1989.5" y="1705.0" width="2" height="12" fill="#4a4a4a"/>
<rect x="2040.9" y="1705.0" width="2" height="12" fill="#4a4a4a"/>
<rect x="2092.3" y="1705.0" width="2" height="12" fill="#4a4a4a"/>
<rect x="2143.7" y="1705.0" width="2" height="12" fill="#4a4a4a"/>
<rect x="2195.1" y="1705.0" width="2" height="12" fill="#4a4a4a"/>
<text x="1630.7" y="1737.4" text-anchor="middle" class="ax">-0.7</text>
<text x="1733.5" y="1737.4" text-anchor="middle" class="ax">-0.5</text>
<text x="1836.3" y="1737.4" text-anchor="middle" class="ax">-0.3</text>
<text x="1939.1" y="1737.4" text-anchor="middle" class="ax">-0.1</text>
<text x="2041.9" y="1737.4" text-anchor="middle" class="ax">0.1</text>
<text x="2144.7" y="1737.4" text-anchor="middle" class="ax">0.3</text>
<text x="2238.3" y="1737.4" text-anchor="middle" class="ax">0</text>
<text x="2264.2" y="1540.8" class="ax">1</text>
<text x="2264.2" y="1655.4" class="ax">3</text>
</svg>
<div class="abs" style="left:2432px;top:216px;width:494px;height:1624px;background:#2a2a2a;border-left:2px solid #4d4d4d"></div>
<div class="t " style="left:2466.5px;top:236.53px;font-size:36px;color:#fff;">Settings</div>
<svg style="position:absolute;left:2838px;top:237px;" width="48" height="48" viewBox="0 0 24 24"><path fill="#fff" d="M19 6.410L17.590 5 12 10.590 6.410 5 5 6.410 10.590 12 5 17.590 6.410 19 12 13.410 17.590 19 19 17.590 13.410 12z"/></svg>
<div class="hl" style="left:2434px;top:300px;width:492px"></div>
<div class="hl" style="left:2434px;top:637px;width:492px"></div>
<div class="hl" style="left:2434px;top:1118px;width:492px"></div>
<div class="hl" style="left:2434px;top:1333px;width:492px"></div>
<div class="hl" style="left:2434px;top:1740px;width:492px"></div>
<div class="t sec" style="left:2466px;top:332.99px;font-size:26px;">GENERAL</div>
<div class="t lab" style="left:2466px;top:383.98px;font-size:24px;">Horizontal Axis</div>
<div class="sel" style="top:426px"></div>
<div class="t selt" style="left:2480px;top:442.48px;font-size:24px;">Step</div>
<svg class="abs" style="left:2860px;top:450px" width="20" height="10" viewBox="0 0 20 10"><path d="M0 0H20L10 10Z" fill="#c0c0c0"/></svg>
<div class="t lab" style="left:2466px;top:506.58px;font-size:24px;">Card Width</div>
<div class="trk" style="left:2480px;top:575px;width:330px"></div>
<div class="abs" style="left:2452px;top:563px;width:28px;height:28px;border-radius:50%;border:4px solid #6f6f6f"></div>
<svg style="position:absolute;left:2838.4px;top:556px;" width="48" height="48" viewBox="0 0 24 24"><path fill="#bdbdbd" d="M14 12c0-1.100-.9-2-2-2s-2 .9-2 2 .9 2 2 2 2-.9 2-2zm-2-9c-4.970 0-9 4.030-9 9H0l4 4 4-4H5c0-3.870 3.130-7 7-7s7 3.130 7 7-3.130 7-7 7c-1.510 0-2.910-.49-4.060-1.300l-1.420 1.440C8.040 20.300 9.940 21 12 21c4.970 0 9-4.030 9-9s-4.030-9-9-9z"/></svg>
<div class="t sec" style="left:2466px;top:669.79px;font-size:26px;">SCALARS</div>
<div class="t lab" style="left:2466px;top:721.08px;font-size:24px;">Smoothing</div>
<div class="trk" style="left:2466px;top:789px;width:279px"></div>
<div class="trko" style="left:2466px;top:789px;width:169px"></div>
<div class="thumb" style="left:2621px;top:777px"></div>
<div class="abs" style="left:2769px;top:763px;width:133px;height:56px;border:2px solid #3d4a5c;border-radius:6px"></div>
<div class="t " style="left:2779.3px;top:778.14px;font-size:27px;color:#bdbdbd;">0.6</div>
<div class="abs" style="left:2856px;top:773px;width:36px;height:36px;background:#e9e9ef"></div>
<svg class="abs" style="left:2856px;top:773px" width="36" height="36" viewBox="0 0 36 36"><path d="M11.5 13.5 L18 7.5 L24.500 13.5 M11.5 22.5 L18 28.500 L24.500 22.5" fill="none" stroke="#7b7b8c" stroke-width="2.4"/></svg>
<div class="t lab" style="left:2466px;top:841.58px;font-size:24px;">Tooltip sorting method</div>
<div class="sel" style="top:884px"></div>
<div class="t selt" style="left:2480px;top:900.68px;font-size:24px;">Alphabetical</div>
<svg class="abs" style="left:2860px;top:908px" width="20" height="10" viewBox="0 0 20 10"><path d="M0 0H20L10 10Z" fill="#c0c0c0"/></svg>
<div class="cb" style="left:2466px;top:973px"><svg width="32" height="32" viewBox="0 0 24 24" style="position:absolute;left:0;top:0"><path d="M4.6 12.6 L9.6 17.4 L19.6 7.0" fill="none" stroke="#2a2a2a" stroke-width="2.1"/></svg></div>
<div class="t " style="left:2514.3px;top:977.88px;font-size:24px;color:#bdbdbd;letter-spacing:0.1px;">Ignore outliers in chart scaling</div>
<div class="cbo" style="left:2466px;top:1045px"></div>
<div class="t " style="left:2514.3px;top:1049.68px;font-size:24px;color:#bdbdbd;letter-spacing:0.1px;">Partition non-monotonic X axis</div>
<svg style="position:absolute;left:2854.5px;top:1045.5px;" width="31" height="31" viewBox="0 0 24 24"><path fill="#bdbdbd" d="M11 18h2v-2h-2v2zm1-16C6.480 2 2 6.480 2 12s4.480 10 10 10 10-4.480 10-10S17.520 2 12 2zm0 18c-4.410 0-8-3.590-8-8s3.590-8 8-8 8 3.590 8 8-3.590 8-8 8zm0-14c-2.210 0-4 1.790-4 4h2c0-1.100.9-2 2-2s2 .9 2 2c0 2-3 1.750-3 5h2c0-2.250 3-2.500 3-5 0-2.210-1.790-4-4-4z"/></svg>
<div class="t sec" style="left:2466px;top:1149.99px;font-size:26px;">HISTOGRAMS</div>
<div class="t lab" style="left:2466px;top:1200.68px;font-size:24px;">Mode</div>
<div class="sel" style="top:1243px"></div>
<div class="t selt" style="left:2480px;top:1260.98px;font-size:24px;">Offset</div>
<svg class="abs" style="left:2860px;top:1267px" width="20" height="10" viewBox="0 0 20 10"><path d="M0 0H20L10 10Z" fill="#c0c0c0"/></svg>
<div class="t sec" style="left:2466px;top:1365.99px;font-size:26px;">IMAGES</div>
<div class="t lab" style="left:2466px;top:1416.88px;font-size:24px;">Brightness</div>
<div class="trk" style="left:2466px;top:1485px;width:344px"></div>
<div class="trko" style="left:2466px;top:1485px;width:172px"></div>
<div class="thumb" style="left:2624px;top:1473px"></div>
<svg style="position:absolute;left:2838.4px;top:1466px;" width="48" height="48" viewBox="0 0 24 24"><path fill="#bdbdbd" d="M14 12c0-1.100-.9-2-2-2s-2 .9-2 2 .9 2 2 2 2-.9 2-2zm-2-9c-4.970 0-9 4.030-9 9H0l4 4 4-4H5c0-3.870 3.130-7 7-7s7 3.130 7 7-3.130 7-7 7c-1.510 0-2.910-.49-4.060-1.300l-1.420 1.440C8.040 20.300 9.940 21 12 21c4.970 0 9-4.030 9-9s-4.030-9-9-9z"/></svg>
<div class="t lab" style="left:2466px;top:1537.68px;font-size:24px;">Contrast</div>
<div class="trk" style="left:2466px;top:1606px;width:344px"></div>
<div class="trko" style="left:2466px;top:1606px;width:69px"></div>
<div class="thumb" style="left:2521px;top:1594px"></div>
<svg style="position:absolute;left:2838.4px;top:1587px;" width="48" height="48" viewBox="0 0 24 24"><path fill="#bdbdbd" d="M14 12c0-1.100-.9-2-2-2s-2 .9-2 2 .9 2 2 2 2-.9 2-2zm-2-9c-4.970 0-9 4.030-9 9H0l4 4 4-4H5c0-3.870 3.130-7 7-7s7 3.130 7 7-3.130 7-7 7c-1.510 0-2.910-.49-4.060-1.300l-1.420 1.440C8.040 20.300 9.940 21 12 21c4.970 0 9-4.030 9-9s-4.030-9-9-9z"/></svg>
<div class="cbo" style="left:2466px;top:1668px"></div>
<div class="t " style="left:2514.3px;top:1672.58px;font-size:24px;color:#bdbdbd;letter-spacing:0.1px;">Show actual image size</div>
</div>
</body></html>
